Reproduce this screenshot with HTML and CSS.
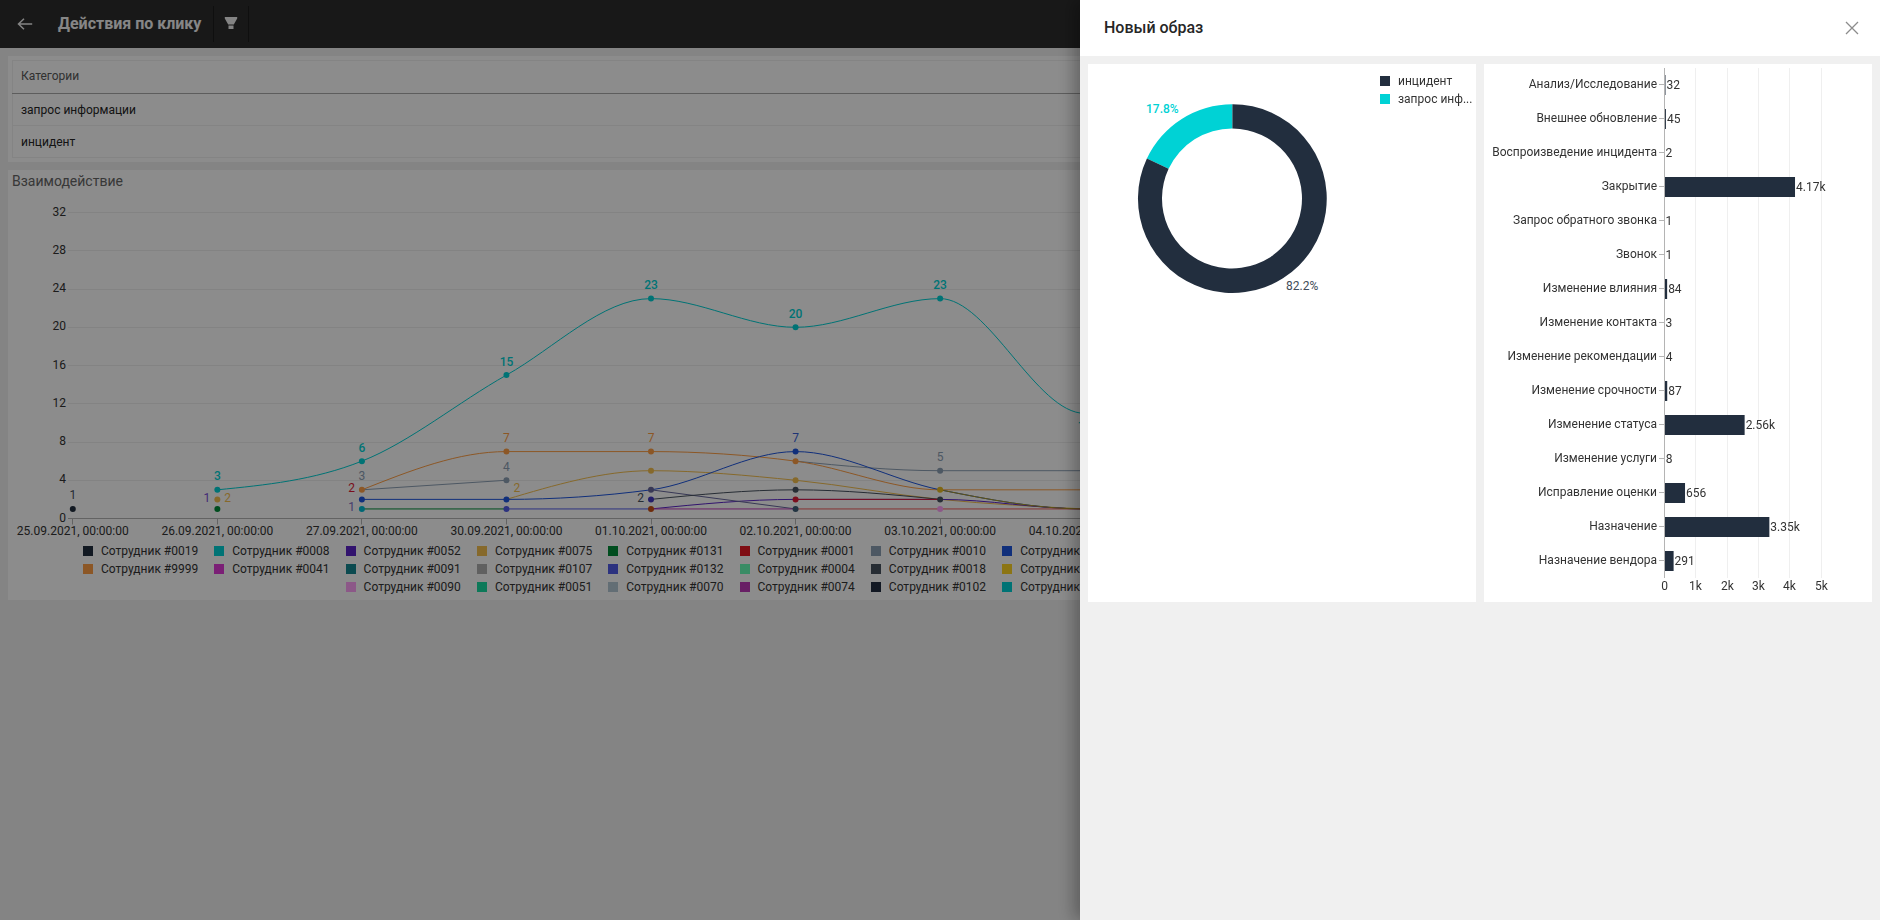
FILE: index.html
```html
<!DOCTYPE html>
<html lang="ru">
<head>
<meta charset="utf-8">
<meta name="viewport" content="width=device-width, initial-scale=1">
<title>Действия по клику</title>
<link rel="stylesheet" href="styles.css">
</head>
<body>
<header class="topbar">
  <button class="icon-btn back" type="button" aria-label="Назад">
    <svg width="16" height="12" viewBox="0 0 16 12" fill="none" stroke="currentColor" stroke-width="1.5"><path d="M15.2 6H1.5M7 .7 1.5 6 7 11.3"/></svg>
  </button>
  <h1 class="topbar-title">Действия по клику</h1>
  <button class="icon-btn filter" type="button" aria-label="Фильтр">
    <svg width="14" height="14" viewBox="0 0 14 14" fill="currentColor"><path d="M.8 0h12.4v1.5L9.8 7.5H4.2L.8 1.5zM4.5 8.5h5V12h-5z"/></svg>
  </button>
</header>
<main class="board">
  <section class="card table-card">
    <table class="categories">
      <thead><tr><th scope="col">Категории</th></tr></thead>
      <tbody>
        <tr><td>запрос информации</td></tr>
        <tr><td>инцидент</td></tr>
      </tbody>
    </table>
  </section>
  <section class="card chart-card">
    <h2 class="chart-title">Взаимодействие</h2>
    <svg class="line-chart" id="line-chart" viewBox="8 196 1864 346" role="img" aria-label="Взаимодействие"></svg>
    <ul class="legend" id="line-legend"></ul>
  </section>
</main>
<div class="overlay"></div>
<aside class="drawer" role="dialog" aria-labelledby="drawer-title">
  <header class="drawer-head">
    <h2 class="drawer-title" id="drawer-title">Новый образ</h2>
    <button class="close" type="button" aria-label="Закрыть">
      <svg width="14" height="14" viewBox="0 0 14 14" fill="none" stroke="currentColor" stroke-width="1.3"><path d="M1 1l12 12M13 1 1 13"/></svg>
    </button>
  </header>
  <div class="drawer-body">
    <section class="card pie-card">
      <svg class="pie" viewBox="0 0 288 240" role="img" aria-label="Доли категорий">
        <path fill="#00d2d5" d="M144.4 40.2A94.4 94.4 0 0 0 58.9 94.5L80.6 104.8A70 70 0 0 1 144.4 64.5Z"/>
        <path fill="#222e3e" d="M144.4 40.2A94.4 94.4 0 1 1 58.9 94.5L80.6 104.8A70 70 0 1 0 144.4 64.5Z"/>
        <text class="strong" x="58" y="49" fill="#00d2d5">17.8%</text>
        <text x="198" y="226" fill="#414b58">82.2%</text>
      </svg>
      <ul class="pie-legend">
        <li><i class="swatch" style="background:#222e3e"></i><span>инцидент</span></li>
        <li><i class="swatch" style="background:#00d2d5"></i><span>запрос инф...</span></li>
      </ul>
    </section>
    <section class="card">
      <svg class="bar-chart" id="bar-chart" viewBox="0 0 388 538" role="img" aria-label="Количество действий"></svg>
    </section>
  </div>
</aside>
<script src="script.js"></script>
</body>
</html>
```
FILE: styles.css
```css
* { box-sizing: border-box; }
body {
  margin: 0;
  min-height: 100vh;
  background: #f0f0f0;
  color: #333;
  font: 12px/18px Roboto, "Noto Sans", sans-serif;
}
h1, h2, ul { margin: 0; padding: 0; }
ul { list-style: none; }
button { padding: 0; border: 0; background: none; font: inherit; cursor: pointer; }
svg { display: block; }
svg text { font-size: 12px; }

.topbar {
  display: flex;
  align-items: center;
  height: 48px;
  background: #2d2d2d;
  color: #fff;
}
.icon-btn {
  display: flex;
  align-items: center;
  justify-content: center;
  height: 36px;
  color: #f0f0f0;
}
.back { width: 50px; }
.topbar-title {
  padding: 0 12px 0 8px;
  color: #f5f5f5;
  font-size: 16px;
  line-height: 24px;
  font-weight: 700;
}
.filter {
  width: 36px;
  border: solid #1c1c1c;
  border-width: 0 1px;
}

.board {
  display: flex;
  flex-direction: column;
  gap: 8px;
  padding: 8px;
}
.card { background: #fff; }
.table-card { padding: 4px; }
.categories {
  width: 100%;
  border-collapse: collapse;
  border: 1px solid #f0f0f0;
}
.categories th, .categories td {
  height: 32px;
  padding: 0 8px;
  text-align: left;
  font-weight: 400;
  color: #262626;
  border-bottom: 1px solid #f0f0f0;
}
.categories th {
  height: 33px;
  padding-bottom: 2px;
  color: #595959;
  border-bottom: 1px solid #aaa;
}
.chart-title {
  padding: 0 4px 4px;
  font-size: 14px;
  line-height: 22px;
  font-weight: 400;
  color: #666;
}
.line-chart { width: 100%; height: auto; }
.legend {
  display: grid;
  grid-template-columns: repeat(13, minmax(0, 1fr));
  padding: 0 82px 4px 75px;
}
.legend li, .pie-legend li {
  display: flex;
  align-items: center;
  gap: 8px;
  white-space: nowrap;
}
.legend .row-start-1 { grid-column-start: 1; }
.legend .row-start-3 { grid-column-start: 3; }
.swatch { flex: none; width: 10px; height: 10px; }

.strong { font-weight: 500; }
.grid { stroke: #efefef; }
.axis { stroke: #b4b4b4; fill: none; }
.label { fill: #333; }
.middle { text-anchor: middle; }
.end { text-anchor: end; }
.series { fill: none; stroke-width: 1; }

.overlay {
  position: fixed;
  inset: 0;
  background: rgba(0, 0, 0, .45);
}
.drawer {
  position: fixed;
  top: 0;
  right: 0;
  bottom: 0;
  display: flex;
  flex-direction: column;
  width: 800px;
  max-width: 100%;
  background: #f0f0f0;
  box-shadow: -6px 0 16px rgba(0, 0, 0, .3);
}
.drawer-head {
  display: flex;
  align-items: center;
  justify-content: space-between;
  height: 56px;
  padding: 0 21px 0 24px;
  background: #fff;
}
.drawer-title {
  font-size: 16px;
  line-height: 22px;
  font-weight: 500;
  color: #262626;
}
.close { color: #8c8c8c; }
.drawer-body {
  display: grid;
  grid-template-columns: 1fr 1fr;
  gap: 8px;
  padding: 8px;
}
.pie-card {
  display: flex;
  align-items: flex-start;
  gap: 4px;
}
.pie { flex: 1; min-width: 0; }
.pie-legend { width: 96px; padding-top: 8px; }
.bar-chart { width: 100%; height: auto; }
```
FILE: script.js
```javascript
const NS = 'http://www.w3.org/2000/svg';

function add(parent, tag, attrs, text) {
  const el = document.createElementNS(NS, tag);
  for (const key in attrs) el.setAttribute(key, attrs[key]);
  if (text !== undefined) el.textContent = text;
  parent.appendChild(el);
  return el;
}

// Monotone cubic curve: no overshoot, flat at local extremes.
function smoothPath(pts) {
  const n = pts.length;
  const slope = [];
  for (let i = 1; i < n; i++) slope.push((pts[i][1] - pts[i - 1][1]) / (pts[i][0] - pts[i - 1][0]));
  const tan = pts.map(() => 0);
  for (let i = 1; i < n - 1; i++) {
    const a = slope[i - 1], b = slope[i];
    tan[i] = a * b <= 0 ? 0 : Math.sign(a) * Math.min(Math.abs(a), Math.abs(b), Math.abs(a + b) / 4) * 2;
  }
  tan[0] = n > 2 ? (3 * slope[0] - tan[1]) / 2 : slope[0];
  tan[n - 1] = n > 2 ? (3 * slope[n - 2] - tan[n - 2]) / 2 : slope[0];
  let d = 'M' + pts[0];
  for (let i = 1; i < n; i++) {
    const [x0, y0] = pts[i - 1], [x1, y1] = pts[i], h = (x1 - x0) / 3;
    d += `C${x0 + h} ${y0 + h * tan[i - 1]} ${x1 - h} ${y1 - h * tan[i]} ${x1} ${y1}`;
  }
  return d;
}

const line = document.getElementById('line-chart');
const X = i => 72.8 + 144.55 * i;
const Y = v => 518.5 - 9.56 * v;

for (let v = 4; v <= 32; v += 4) {
  const y = Math.floor(Y(v)) + 0.5;
  add(line, 'line', { class: 'grid', x1: 68, x2: 1854, y1: y, y2: y });
}
for (let v = 0; v <= 32; v += 4) {
  add(line, 'text', { class: 'label end', x: 66, y: Math.round(Y(v)) + 3 }, v);
}
add(line, 'path', { class: 'axis', d: 'M68 518.5H1854' });
['25.09', '26.09', '27.09', '30.09', '01.10', '02.10', '03.10', '04.10'].forEach((day, i) => {
  const x = Math.floor(X(i)) + 0.5;
  add(line, 'path', { class: 'axis', d: `M${x} 518.5v6` });
  add(line, 'text', { class: 'label middle', x: X(i), y: 535 }, day + '.2021, 00:00:00');
});

// [colour, first tick, values]
const series = [
  ['#00d2d5', 1, [3, 6, 15, 23, 20, 23, 11, 12]],
  ['#8da0b5', 2, [3, 4]],
  ['#8da0b5', 5, [6, 5, 5]],
  ['#ff9f45', 2, [3, 7, 7, 6, 3, 3]],
  ['#f5c04f', 3, [2, 5, 4, 2, 1]],
  ['#1e56e0', 2, [2, 2, 3, 7, 3, 1, 1]],
  ['#5b24c9', 4, [1, 2, 2, 1, 1]],
  ['#008c38', 2, [1, 1]],
  ['#505ce8', 3, [1, 1]],
  ['#66669c', 4, [3, 1]],
  ['#475260', 4, [2, 3, 2]],
  ['#e01a35', 5, [2, 2]],
  ['#bd3ab8', 4, [1, 1]],
  ['#f05a5a', 5, [1, 1, 1]],
  ['#b09a20', 6, [3, 1, 1]]
];
series.forEach(([stroke, start, values]) => {
  add(line, 'path', { class: 'series', stroke, d: smoothPath(values.map((v, i) => [X(start + i), Y(v)])) });
});

// [tick, value, colour]
[
  [0, 1, '#222e3e'], [1, 3, '#00d2d5'], [1, 2, '#f5c04f'], [1, 1, '#008c38'],
  [2, 6, '#00d2d5'], [2, 3, '#ff9f45'], [2, 2, '#1e56e0'], [2, 1, '#00bcd4'],
  [3, 15, '#00d2d5'], [3, 7, '#ff9f45'], [3, 4, '#8da0b5'], [3, 2, '#1e56e0'], [3, 1, '#505ce8'],
  [4, 23, '#00d2d5'], [4, 7, '#ff9f45'], [4, 5, '#f5c04f'], [4, 3, '#66669c'], [4, 2, '#4338c0'], [4, 1, '#c84f14'],
  [5, 20, '#00d2d5'], [5, 7, '#1e56e0'], [5, 6, '#ff9f45'], [5, 4, '#f5c04f'], [5, 3, '#475260'], [5, 2, '#e01a35'], [5, 1, '#3f5f78'],
  [6, 23, '#00d2d5'], [6, 5, '#8da0b5'], [6, 3, '#e8bc22'], [6, 2, '#475260'], [6, 1, '#ffa0f8']
].forEach(([i, v, fill]) => add(line, 'circle', { cx: X(i), cy: Y(v), r: 3, fill }));

// [tick, value, text, colour, side]
[
  [0, 1, 1, '#475260', 'top'], [1, 3, 3, '#00d2d5', 'top'], [1, 2, 1, '#7a50d8', 'left'], [1, 2, 2, '#f5c04f', 'right'],
  [2, 6, 6, '#00d2d5', 'top'], [2, 3, 3, '#8da0b5', 'top'], [2, 3, 2, '#e01a35', 'left'], [2, 1, 1, '#8070c8', 'left'],
  [3, 15, 15, '#00d2d5', 'top'], [3, 7, 7, '#ff9f45', 'top'], [3, 4, 4, '#8da0b5', 'top'], [3, 3, 2, '#f5c04f', 'right'],
  [4, 23, 23, '#00d2d5', 'top'], [4, 7, 7, '#ff9f45', 'top'], [4, 2, 2, '#475260', 'left'],
  [5, 20, 20, '#00d2d5', 'top'], [5, 7, 7, '#3a60d8', 'top'],
  [6, 23, 23, '#00d2d5', 'top'], [6, 5, 5, '#8da0b5', 'top'], [7, 11, 11, '#00d2d5', 'bottom']
].forEach(([i, v, text, fill, side]) => {
  const place = { top: [0, -9, 'middle'], bottom: [0, 17, 'middle'], left: [-7, 3, 'end'], right: [7, 3, ''] }[side];
  const weight = fill === '#00d2d5' ? ' strong' : '';
  add(line, 'text', { class: place[2] + weight, x: X(i) + place[0], y: Math.floor(Y(v)) + place[1], fill }, text);
});

const legend = document.getElementById('line-legend');
[
  [1, [['#222e3e', '#0019'], ['#00d2d5', '#0008'], ['#5b24c9', '#0052'], ['#f5c04f', '#0075'], ['#008c38', '#0131'], ['#e81825', '#0001'], ['#8da0b5', '#0010'], ['#1e56e0', '']]],
  [1, [['#ff9f45', '#9999'], ['#e03ad8', '#0041'], ['#148793', '#0091'], ['#b0b0b0', '#0107'], ['#505ce8', '#0132'], ['#69ffb9', '#0004'], ['#475260', '#0018'], ['#ffd526', '']]],
  [3, [['#ffa0f8', '#0090'], ['#18dda2', '#0051'], ['#b4c8d6', '#0070'], ['#bd3ab8', '#0074'], ['#212d40', '#0102'], ['#00d2d5', '']]]
].forEach(([column, items]) => items.forEach(([color, id], i) => {
  const li = document.createElement('li');
  if (i === 0) li.className = 'row-start-' + column;
  const swatch = document.createElement('i');
  swatch.className = 'swatch';
  swatch.style.background = color;
  const name = document.createElement('span');
  name.textContent = ('Сотрудник ' + id).trim();
  li.append(swatch, name);
  legend.appendChild(li);
}));

const bars = document.getElementById('bar-chart');
const BX = v => 180.5 + v * 0.0313;
for (let k = 0; k <= 5; k++) {
  const x = Math.floor(BX(k * 1000)) + 0.5;
  if (k) add(bars, 'line', { class: 'grid', x1: x, x2: x, y1: 4, y2: 514 });
  add(bars, 'text', { class: 'label middle', x, y: 526 }, k ? k + 'k' : 0);
}
[
  ['Анализ/Исследование', 32], ['Внешнее обновление', 45], ['Воспроизведение инцидента', 2],
  ['Закрытие', 4170, '4.17k'], ['Запрос обратного звонка', 1], ['Звонок', 1],
  ['Изменение влияния', 84], ['Изменение контакта', 3], ['Изменение рекомендации', 4],
  ['Изменение срочности', 87], ['Изменение статуса', 2560, '2.56k'], ['Изменение услуги', 8],
  ['Исправление оценки', 656], ['Назначение', 3350, '3.35k'], ['Назначение вендора', 291]
].forEach(([name, value, text], i) => {
  const y = 21 + 34 * i;
  add(bars, 'path', { class: 'axis', d: `M175 ${y - 0.5}h5` });
  add(bars, 'rect', { x: 180.5, y: y - 10, width: BX(value) - 180.5, height: 20, fill: '#222e3e' });
  add(bars, 'text', { class: 'label end', x: 173, y: y + 3 }, name);
  add(bars, 'text', { class: 'label', x: BX(value) + 1, y: y + 4 }, text || value);
});
add(bars, 'path', { class: 'axis', d: 'M180.5 4v510' });
```
